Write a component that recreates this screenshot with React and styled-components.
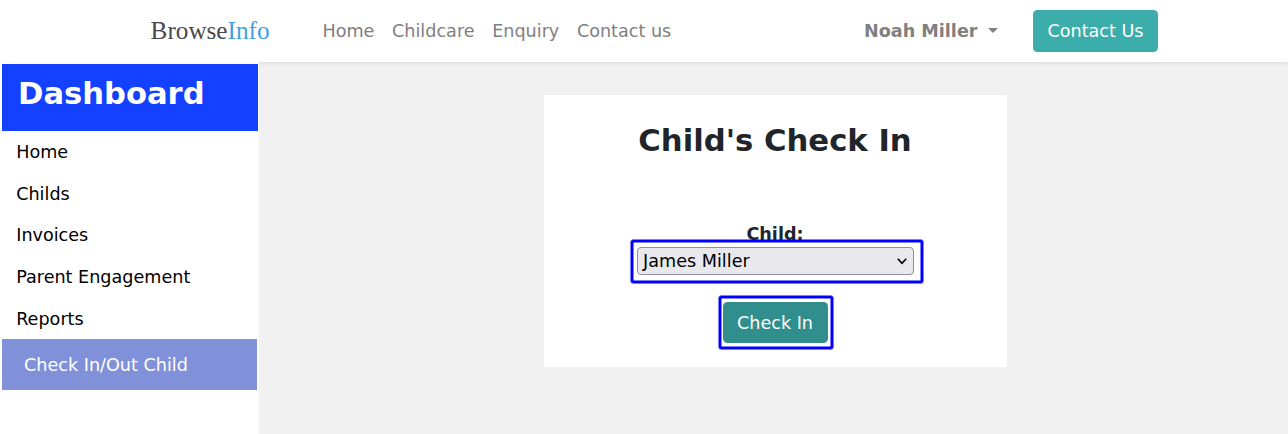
import React from "react";
import styled, { createGlobalStyle } from "styled-components";

const GlobalStyle = createGlobalStyle`
  *, *::before, *::after { box-sizing: border-box; }
  html, body { margin: 0; height: 100%; overflow: hidden; }
  body {
    font-family: "DejaVu Sans", sans-serif;
    font-size: 17.6px;
    line-height: 26.25px;
    color: #212529;
    background: #f1f1f1;
  }
`;

const Page = styled.div`
  display: flex;
  flex-direction: column;
  height: 434px;
`;

const Navbar = styled.header`
  display: flex;
  align-items: center;
  flex: none;
  height: 62px;
  padding: 0 130px 0 150.6px;
  background: #fff;
  box-shadow: 0 2px 4px rgba(0, 0, 0, 0.075);
`;

const Logo = styled.a`
  width: 163.1px;
  font-family: "Liberation Serif", serif;
  font-size: 25.2px;
  line-height: 30px;
  color: #4a4a4a;
  span { color: #429fe3; }
`;

const NavLinks = styled.nav`
  display: flex;
  flex: 1;
`;

const NavLink = styled.a`
  padding: 0 8.8px;
  color: #808080;
`;

const UserMenu = styled.a`
  display: flex;
  align-items: center;
  gap: 10.5px;
  margin-right: 35px;
  font-weight: bold;
  font-size: 17.6px;
  color: #808080;
`;

const Caret = styled.i`
  margin-top: -2px;
  border: 5px solid transparent;
  border-top-color: #808080;
  border-bottom: 0;
`;

const Button = styled.button`
  display: block;
  height: ${(p) => p.$height || "42px"};
  width: ${(p) => p.$width};
  padding: 0;
  border: 0;
  border-radius: 4.5px;
  font: inherit;
  color: #fff;
  background: ${(p) => p.$color};
`;

const Body = styled.div`
  display: flex;
  flex: 1;
`;

const Sidebar = styled.aside`
  width: 259px;
  padding: 2px 1px 0 2px;
  background: #fff;
`;

const SidebarTitle = styled.h3`
  height: 67px;
  margin: 0;
  padding: 11px 16px;
  font-size: 30.6px;
  line-height: 37px;
  color: #fff;
  background: #1341ff;
`;

const SidebarItem = styled.a`
  display: block;
  height: 41.7px;
  padding: 7.85px 14.2px;
  color: #000;
`;

const ActiveItem = styled(SidebarItem)`
  height: 51px;
  margin-right: 1px;
  padding: 12.5px 22px;
  color: #fff;
  background: #8091da;
`;

const Main = styled.main`
  display: flex;
  justify-content: center;
  align-items: flex-start;
  flex: 1;
  padding: 33px 0 0 3px;
`;

const Card = styled.section`
  display: flex;
  flex-direction: column;
  align-items: center;
  width: 463px;
  height: 272px;
  padding-top: 27px;
  background: #fff;
`;

const CardTitle = styled.h3`
  margin: 0 0 62px;
  font-size: 30.7px;
  line-height: 37px;
`;

const Label = styled.label`
  font-weight: bold;
`;

const Highlight = styled.div`
  position: relative;
  margin-top: ${(p) => p.$top || "0"};
  &::after {
    content: "";
    position: absolute;
    inset: ${(p) => p.$inset};
    border: 2px solid #0000fb;
    border-radius: 2px;
    box-shadow: 0 0 0 0.5px #0000fb, inset 0 0 0 0.5px #0000fb;
    pointer-events: none;
  }
`;

const Select = styled.div`
  display: flex;
  align-items: center;
  justify-content: space-between;
  width: 277px;
  height: 28px;
  padding: 0 6px 0 5.6px;
  border: 1px solid #8f8f9d;
  border-radius: 4px;
  color: #000;
  background: #e9e9ed;
`;

const items = ["Home", "Childs", "Invoices", "Parent Engagement", "Reports"];
const links = ["Home", "Childcare", "Enquiry", "Contact us"];

export default function App() {
  return (
    <Page>
      <GlobalStyle />
      <Navbar>
        <Logo>Browse<span>Info</span></Logo>
        <NavLinks>
          {links.map((l) => <NavLink key={l}>{l}</NavLink>)}
        </NavLinks>
        <UserMenu>Noah Miller<Caret /></UserMenu>
        <Button $width="125px" $color="#3badaa">Contact Us</Button>
      </Navbar>
      <Body>
        <Sidebar>
          <SidebarTitle>Dashboard</SidebarTitle>
          {items.map((i) => <SidebarItem key={i}>{i}</SidebarItem>)}
          <ActiveItem>Check In/Out Child</ActiveItem>
        </Sidebar>
        <Main>
          <Card>
            <CardTitle>Child's Check In</CardTitle>
            <Label>Child:</Label>
            <Highlight $inset="-7px -9px -8px -6px" $top="-0.25px">
              <Select>
                James Miller
                <svg width="10" height="8" viewBox="0 0 10 8" fill="none" stroke="#000" strokeWidth="1.6">
                  <path d="M0.8 1.8 5 6.4 9.2 1.8" />
                </svg>
              </Select>
            </Highlight>
            <Highlight $inset="-6px -5px -6px -4px" $top="27px">
              <Button $width="105px" $height="41.4px" $color="#308f8c">Check In</Button>
            </Highlight>
          </Card>
        </Main>
      </Body>
    </Page>
  );
}
